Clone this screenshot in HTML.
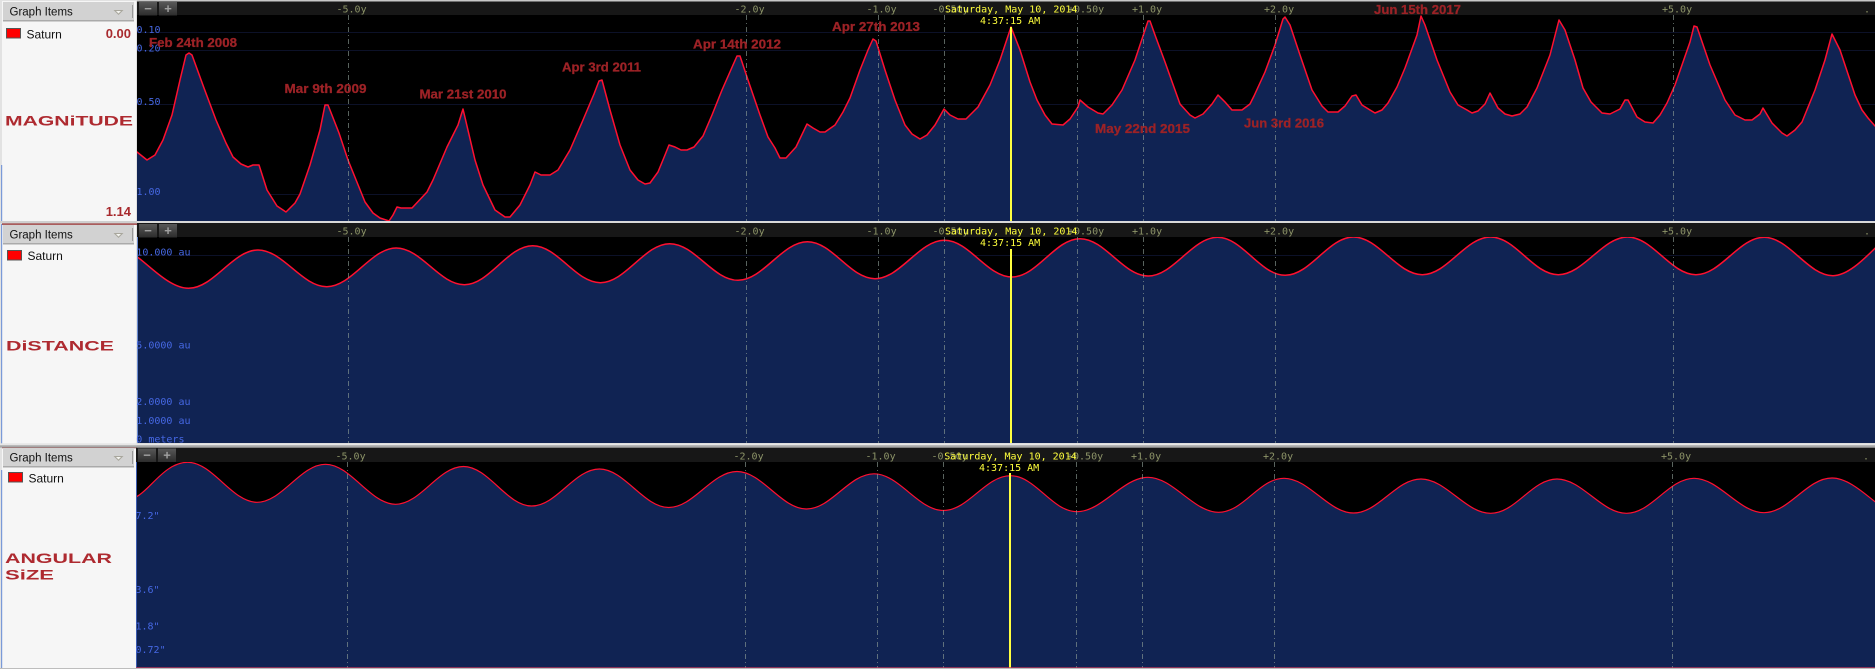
<!DOCTYPE html>
<html>
<head>
<meta charset="utf-8">
<title>Saturn</title>
<style>
html,body{margin:0;padding:0;background:#c8c8c8;width:1875px;height:669px;overflow:hidden}
svg{display:block}
text{white-space:pre}
.ax{font:10px "DejaVu Sans Mono",monospace;fill:#8d9468}
.yl{font:10px "DejaVu Sans Mono",monospace;fill:#4668e4}
.yt{font:10px "DejaVu Sans Mono",monospace;fill:#ffff3c}
.gi{font:11.5px "Liberation Sans",sans-serif;fill:#111}
.sa{font:12px "Liberation Sans",sans-serif;fill:#111}
.va{font:bold 13px "Liberation Sans",sans-serif;fill:#a82a2e}
.an{font:bold 13px "Liberation Sans",sans-serif;fill:#9c2226;stroke:#9c2226;stroke-width:.3}
.ti{font:bold 14px "Liberation Sans",sans-serif;fill:#ae2a30}
.bt{font:bold 13px "Liberation Sans",sans-serif;fill:#a0a0a0;text-anchor:middle}
.vl{stroke:#8f9f98;stroke-opacity:.62;stroke-width:1;stroke-dasharray:5 3 1 3;fill:none}
.cv{fill:#102353;stroke:#ff1030;stroke-width:1.5;stroke-linejoin:round}
.gl{stroke:#0c1128;stroke-width:1;fill:none}
</style>
</head>
<body>
<svg xmlns="http://www.w3.org/2000/svg" width="1875" height="669" viewBox="0 0 1875 669">
<defs>
<linearGradient id="b" x1="0" y1="0" x2="0" y2="1"><stop offset="0" stop-color="#585858"/><stop offset="1" stop-color="#2c2c2c"/></linearGradient>
<clipPath id="c1"><rect x="137" y="15" width="1738" height="206"/></clipPath>
<clipPath id="c2"><rect x="137" y="237" width="1738" height="206"/></clipPath>
<clipPath id="c3"><rect x="136" y="462" width="1739" height="206"/></clipPath>
<clipPath id="cl"><rect x="136.5" y="0" width="1738.5" height="669"/></clipPath>
<clipPath id="cl3"><rect x="135.5" y="0" width="1739.5" height="669"/></clipPath>
</defs>

<rect x="0" y="0" width="1875" height="669" fill="#c8c8c8"/>

<!-- LEFT PANELS -->
<rect x="0" y="0" width="137" height="669" fill="#e2e2e2"/>
<rect x="2" y="1" width="134" height="220" fill="#f6f6f6"/>
<rect x="2" y="224" width="134" height="220" fill="#f6f6f6"/>
<rect x="2" y="448" width="134" height="220" fill="#f6f6f6"/>
<rect x="1" y="165" width="1.2" height="56" fill="#7a9ad8"/>
<rect x="1" y="224" width="1.2" height="220" fill="#7a9ad8"/>
<rect x="1" y="470" width="1.2" height="198" fill="#7a9ad8"/>
<rect x="2" y="223.5" width="135" height="1.2" fill="#8b1a1a"/>
<rect x="2" y="447" width="135" height="1.2" fill="#8b1a1a"/>

<!-- Panel 1 sidebar -->
<rect x="3" y="2" width="131" height="19" fill="#d2d2d2"/>
<rect x="3" y="20" width="131" height="1.5" fill="#aaa"/>
<rect x="132" y="5" width="1" height="13" fill="#999"/>
<text class="gi" x="9.5" y="15.5">Graph Items</text>
<path d="M113.5,10 H123.5 L118.5,15 Z" fill="#a8a69c"/><path d="M116,11 H121 L118.5,13.5 Z" fill="#f4f4f0"/>
<rect x="6.5" y="28.5" width="14" height="9.5" fill="#f00" stroke="#555"/>
<text class="sa" x="26.5" y="38.5">Saturn</text>
<text class="va" x="131" y="38" text-anchor="end">0.00</text>
<text class="va" x="131" y="216" text-anchor="end">1.14</text>
<text class="ti" x="5" y="125.3" textLength="128" lengthAdjust="spacingAndGlyphs">MAGNiTUDE</text>

<!-- Panel 2 sidebar -->
<rect x="3" y="225" width="131" height="19" fill="#d2d2d2"/>
<rect x="3" y="243" width="131" height="1.5" fill="#aaa"/>
<rect x="132" y="228" width="1" height="13" fill="#999"/>
<text class="gi" x="9.5" y="238.5">Graph Items</text>
<path d="M113.5,233 H123.5 L118.5,238 Z" fill="#a8a69c"/><path d="M116,234 H121 L118.5,236.5 Z" fill="#f4f4f0"/>
<rect x="7.5" y="250.5" width="14" height="9.5" fill="#f00" stroke="#555"/>
<text class="sa" x="27.5" y="260">Saturn</text>
<text class="ti" x="6" y="350.3" textLength="108" lengthAdjust="spacingAndGlyphs">DiSTANCE</text>

<!-- Panel 3 sidebar -->
<rect x="3" y="448" width="131" height="19" fill="#d2d2d2"/>
<rect x="3" y="466" width="131" height="1.5" fill="#aaa"/>
<rect x="132" y="451" width="1" height="13" fill="#999"/>
<text class="gi" x="9.5" y="461.5">Graph Items</text>
<path d="M113.5,456 H123.5 L118.5,461 Z" fill="#a8a69c"/><path d="M116,457 H121 L118.5,459.5 Z" fill="#f4f4f0"/>
<rect x="8.5" y="472.5" width="14" height="9.5" fill="#f00" stroke="#555"/>
<text class="sa" x="28.5" y="482.5">Saturn</text>
<text class="ti" x="5" y="563" textLength="107" lengthAdjust="spacingAndGlyphs">ANGULAR</text>
<text class="ti" x="5" y="579.5" textLength="49" lengthAdjust="spacingAndGlyphs">SiZE</text>

<!-- PANEL 1 PLOT -->
<rect x="137" y="15" width="1738" height="206" fill="#000"/>
<rect x="137" y="1.5" width="1738" height="13.5" fill="#171717"/>
<path class="gl" d="M137,32.5H1875M137,50.5H1875M137,104.5H1875M137,194.5H1875"/>
<g clip-path="url(#c1)">
<path class="cv" d="M130,300 L130,146 L137,152 L147,160 L155,155 L163,140 L172,115 L180,80 L186,55 L189,53 L192,55 L204,88 L216,120 L226,143 L233,157 L241,164 L248,167 L253,165 L259,165 L267,190 L277,206 L286,212 L295,203 L300,194 L310,165 L320,130 L325,105 L328,105 L339,133 L348,160 L365,202 L373,213 L380,218 L389,221 L393,215 L397,207 L401,208 L412,208 L427,192 L433,180 L447,147 L458,125 L463,109 L475,160 L483,185 L495,210 L505,217 L510,217 L520,205 L530,185 L535,172 L541,175 L550,175 L558,170 L570,150 L583,120 L594,94 L599,81 L602,80 L610,110 L620,145 L630,170 L638,180 L645,184 L650,183 L658,172 L665,155 L669,145 L675,147 L681,150 L687,150 L694,147 L703,136 L712,115 L722,90 L733,65 L737,56 L740,56 L748,80 L760,115 L768,137 L775,148 L780,158 L786,158 L796,147 L807,124 L813,128 L820,132 L825,132 L835,125 L843,112 L850,98 L860,70 L868,50 L873,39 L876,41 L885,70 L895,100 L905,125 L912,134 L920,139 L927,135 L935,125 L944,109 L950,115 L958,119 L966,119 L978,107 L990,85 L1000,60 L1011,27 L1020,50 L1030,82 L1037,100 L1045,115 L1052,124 L1063,125 L1070,119 L1078,107 L1080,100 L1088,107 L1098,113 L1103,114 L1112,105 L1122,90 L1135,60 L1145,30 L1148,21 L1150,21 L1155,35 L1165,62 L1175,90 L1180,104 L1190,115 L1195,118 L1203,114 L1212,104 L1218,95 L1225,102 L1232,110 L1242,110 L1250,104 L1254,96 L1265,72 L1275,45 L1283,19 L1285,17 L1290,25 L1300,55 L1312,90 L1322,106 L1328,112 L1338,112 L1345,106 L1352,96 L1356,95 L1362,105 L1370,110 L1375,113 L1382,110 L1388,103 L1397,87 L1405,68 L1417,35 L1421,16 L1425,25 L1437,60 L1450,92 L1458,105 L1467,110 L1472,113 L1478,111 L1485,104 L1490,93 L1498,108 L1505,114 L1512,116 L1520,114 L1527,107 L1537,88 L1550,55 L1559,20 L1565,30 L1575,60 L1583,88 L1591,102 L1602,113 L1610,114 L1620,109 L1625,100 L1628,100 L1637,117 L1645,122 L1653,123 L1660,115 L1667,103 L1675,85 L1690,42 L1694,26 L1697,27 L1710,65 L1725,100 L1735,115 L1745,120 L1752,120 L1760,114 L1763,108 L1772,123 L1782,133 L1787,136 L1795,130 L1802,122 L1815,90 L1825,60 L1832,34 L1840,50 L1855,95 L1862,110 L1868,118 L1875,126 L1877,127 L1877,300 Z"/>
</g>
<path class="vl" d="M348.5,15V221M746.5,15V221M878.5,15V221M944.5,15V221M1077.5,15V221M1143.5,15V221M1275.5,15V221M1673.5,15V221"/>
<rect x="1010" y="27" width="2" height="194" fill="#ffff40"/>
<rect x="139" y="2" width="18" height="13.5" fill="url(#b)"/><rect x="159" y="2" width="18" height="13.5" fill="url(#b)"/>
<text class="bt" x="148" y="13">−</text><text class="bt" x="168" y="13">+</text>
<text class="ax" x="336.5" y="12.5">-5.0y</text>
<text class="ax" x="734.5" y="12.5">-2.0y</text>
<text class="ax" x="866.5" y="12.5">-1.0y</text>
<text class="ax" x="932.5" y="12.5">-0.50y</text>
<text class="ax" x="1068" y="12.5">+0.50y</text>
<text class="ax" x="1132" y="12.5">+1.0y</text>
<text class="ax" x="1264" y="12.5">+2.0y</text>
<text class="ax" x="1662" y="12.5">+5.0y</text>
<text class="ax" x="1864" y="12.5">.</text>
<text class="yt" x="945" y="12.5">Saturday, May 10, 2014</text>
<text class="yt" x="980" y="24">4:37:15 AM</text>
<g clip-path="url(#cl)">
<text class="yl" x="136.5" y="33">0.10</text>
<text class="yl" x="136.5" y="51.5">0.20</text>
<text class="yl" x="136.5" y="105">0.50</text>
<text class="yl" x="136.5" y="195">1.00</text>
</g>
<text class="an" x="149" y="47" textLength="88" lengthAdjust="spacingAndGlyphs">Feb 24th 2008</text>
<text class="an" x="284.5" y="93" textLength="82" lengthAdjust="spacingAndGlyphs">Mar 9th 2009</text>
<text class="an" x="419.5" y="98.5" textLength="87" lengthAdjust="spacingAndGlyphs">Mar 21st 2010</text>
<text class="an" x="562" y="71.5" textLength="79" lengthAdjust="spacingAndGlyphs">Apr 3rd 2011</text>
<text class="an" x="693" y="48.5" textLength="88" lengthAdjust="spacingAndGlyphs">Apr 14th 2012</text>
<text class="an" x="832" y="31" textLength="88" lengthAdjust="spacingAndGlyphs">Apr 27th 2013</text>
<text class="an" x="1095" y="133" textLength="95" lengthAdjust="spacingAndGlyphs">May 22nd 2015</text>
<text class="an" x="1244" y="127.5" textLength="80" lengthAdjust="spacingAndGlyphs">Jun 3rd 2016</text>
<text class="an" x="1374" y="14" textLength="87" lengthAdjust="spacingAndGlyphs">Jun 15th 2017</text>

<!-- separators -->
<rect x="137" y="221" width="1738" height="2.2" fill="#d8d8d8"/>
<rect x="0" y="221" width="137" height="2.2" fill="#cfcfcf"/>

<!-- PANEL 2 PLOT -->
<rect x="137" y="237" width="1738" height="206" fill="#000"/>
<rect x="137" y="223" width="1738" height="14" fill="#171717"/>
<path class="gl" d="M137,255.5H1875"/>
<g clip-path="url(#c2)">
<path class="cv" d="M130,500 L130,252 L137,256.7 C150,266 170,288.3 188.6,288.3 C213.6,288.3 233,250 258,250 C283,250 301.8,286.7 326.8,286.7 C351.8,286.7 371.2,248 396.2,248 C421.2,248 439.4,284.7 464.4,284.7 C489.4,284.7 507.7,245.7 532.7,245.7 C557.7,245.7 575.4,282.7 600.4,282.7 C625.4,282.7 644.7,243.7 669.7,243.7 C694.7,243.7 713,280.3 738,280.3 C763,280.3 782.4,241.7 807.4,241.7 C832.4,241.7 850,278.7 875,278.7 C900,278.7 919.4,240.3 944.4,240.3 C969.4,240.3 987,277 1012,277 C1037,277 1055,238.7 1080,238.7 C1105,238.7 1123.2,276 1148.2,276 C1173.2,276 1192.5,237.3 1217.5,237.3 C1242.5,237.3 1260.2,275.3 1285.2,275.3 C1310.2,275.3 1328.5,237 1353.5,237 C1378.5,237 1397.3,274.7 1422.3,274.7 C1447.3,274.7 1465.6,237 1490.6,237 C1515.6,237 1533.3,274.7 1558.3,274.7 C1583.3,274.7 1602.6,237 1627.6,237 C1652.6,237 1670.9,274.7 1695.9,274.7 C1720.9,274.7 1739.1,237.3 1764.1,237.3 C1789.1,237.3 1808,275.7 1833,275.7 C1848,275.7 1865,258 1875,248.3 L1877,246.5 L1877,500 Z"/>
</g>
<path class="vl" d="M348.5,237V443M746.5,237V443M878.5,237V443M944.5,237V443M1077.5,237V443M1143.5,237V443M1275.5,237V443M1673.5,237V443"/>
<rect x="1010" y="249" width="2" height="194" fill="#ffff40"/>
<rect x="139" y="224" width="18" height="13.5" fill="url(#b)"/><rect x="159" y="224" width="18" height="13.5" fill="url(#b)"/>
<text class="bt" x="148" y="235">−</text><text class="bt" x="168" y="235">+</text>
<text class="ax" x="336.5" y="234.5">-5.0y</text>
<text class="ax" x="734.5" y="234.5">-2.0y</text>
<text class="ax" x="866.5" y="234.5">-1.0y</text>
<text class="ax" x="932.5" y="234.5">-0.50y</text>
<text class="ax" x="1068" y="234.5">+0.50y</text>
<text class="ax" x="1132" y="234.5">+1.0y</text>
<text class="ax" x="1264" y="234.5">+2.0y</text>
<text class="ax" x="1662" y="234.5">+5.0y</text>
<text class="ax" x="1864" y="234.5">.</text>
<text class="yt" x="945" y="234.5">Saturday, May 10, 2014</text>
<text class="yt" x="980" y="246">4:37:15 AM</text>
<rect x="137" y="237" width="1" height="206" fill="#6a8ad0"/>
<g clip-path="url(#cl)">
<text class="yl" x="136.3" y="255.5">10.000 au</text>
<text class="yl" x="136.3" y="348.5">5.0000 au</text>
<text class="yl" x="136.3" y="405">2.0000 au</text>
<text class="yl" x="136.3" y="424">1.0000 au</text>
<text class="yl" x="136.3" y="442.5">0 meters</text>
</g>

<!-- separator -->
<rect x="0" y="443.3" width="1875" height="2" fill="#e6e6e6"/>
<rect x="0" y="445.3" width="1875" height="2.4" fill="#a8a8a8"/>

<!-- PANEL 3 PLOT -->
<rect x="136" y="462" width="1739" height="206" fill="#000"/>
<rect x="136" y="447.7" width="1739" height="14.3" fill="#171717"/>
<g clip-path="url(#c3)">
<path class="cv" style="stroke-width:1.2" d="M129,669 L129,501 L136.5,496.7 C150,490 165,462.3 187.7,462.3 C212.7,462.3 232,502.3 257,502.3 C282,502.3 300.5,464.3 325.5,464.3 C350.5,464.3 370.5,504.3 395.5,504.3 C420.5,504.3 438.5,466.5 463.5,466.5 C488.5,466.5 506.7,506 531.7,506 C556.7,506 574.4,469 599.4,469 C624.4,469 643.7,507.5 668.7,507.5 C693.7,507.5 712,471.5 737,471.5 C762,471.5 781.4,509 806.4,509 C831.4,509 849,473.8 874,473.8 C899,473.8 918.4,510.5 943.4,510.5 C968.4,510.5 985.5,475.7 1010.5,475.7 C1035.5,475.7 1052,511.7 1077,511.7 C1102,511.7 1123,477.3 1148,477.3 C1173,477.3 1193.6,512.3 1218.6,512.3 C1243.6,512.3 1259,478.3 1284,478.3 C1309,478.3 1328.5,513 1353.5,513 C1378.5,513 1396,479 1421,479 C1446,479 1465.6,513.3 1490.6,513.3 C1515.6,513.3 1532,479 1557,479 C1582,479 1601.5,513.3 1626.5,513.3 C1651.5,513.3 1669,478.3 1694,478.3 C1719,478.3 1739,512.7 1764,512.7 C1789,512.7 1807,478 1832,478 C1848,478 1865,494 1875,501.7 L1877,503 L1877,669 Z"/>
</g>
<path class="vl" d="M347.5,462V668M745.5,462V668M877.5,462V668M943.5,462V668M1076.5,462V668M1142.5,462V668M1274.5,462V668M1672.5,462V668"/>
<rect x="1009" y="473" width="2" height="195" fill="#ffff40"/>
<rect x="138" y="448.5" width="18" height="13.5" fill="url(#b)"/><rect x="158" y="448.5" width="18" height="13.5" fill="url(#b)"/>
<text class="bt" x="147" y="459.5">−</text><text class="bt" x="167" y="459.5">+</text>
<text class="ax" x="335.5" y="459.5">-5.0y</text>
<text class="ax" x="733.5" y="459.5">-2.0y</text>
<text class="ax" x="865.5" y="459.5">-1.0y</text>
<text class="ax" x="931.5" y="459.5">-0.50y</text>
<text class="ax" x="1067" y="459.5">+0.50y</text>
<text class="ax" x="1131" y="459.5">+1.0y</text>
<text class="ax" x="1263" y="459.5">+2.0y</text>
<text class="ax" x="1661" y="459.5">+5.0y</text>
<text class="ax" x="1863" y="459.5">.</text>
<text class="yt" x="944.3" y="459.5">Saturday, May 10, 2014</text>
<text class="yt" x="979" y="471">4:37:15 AM</text>
<rect x="136" y="462" width="1" height="206" fill="#3a5ab0"/>
<g clip-path="url(#cl3)">
<text class="yl" x="135.5" y="518.8">7.2"</text>
<text class="yl" x="135.5" y="592.8">3.6"</text>
<text class="yl" x="135.5" y="629.5">1.8"</text>
<text class="yl" x="135.5" y="652.8">0.72"</text>
</g>
<rect x="136" y="667.3" width="1739" height="0.8" fill="#c03a5a"/>
<rect x="0" y="668" width="1875" height="1" fill="#bdbdbd"/>
</svg>
</body>
</html>
